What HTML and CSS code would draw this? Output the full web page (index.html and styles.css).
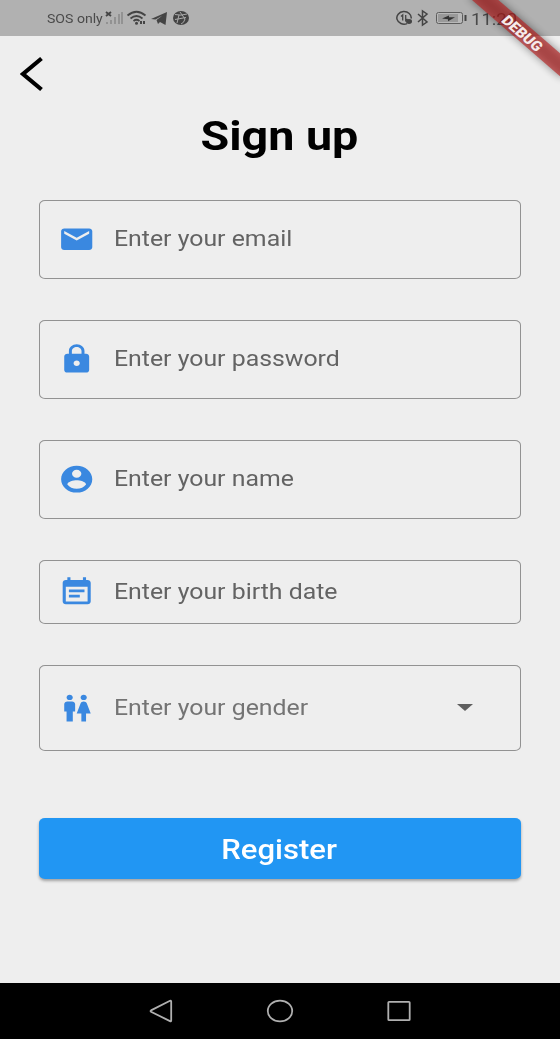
FILE: index.html
```html
<!DOCTYPE html>
<html lang="en">
<head>
<meta charset="utf-8">
<title>Sign up</title>
<link rel="stylesheet" href="styles.css">
</head>
<body>
<div class="screen">
  <header class="status">
    <span class="status-text carrier">SOS only</span>
    <svg class="status-left" width="86" height="20" viewBox="0 0 86 20">
      <path d="M1 3l5 4M6 3l-5 4" stroke="#444" stroke-width="1.9"/>
      <path d="M2 13v2M6 11v4M10 8v7M14 5v10M17 3v12" stroke="#929292" stroke-width="2"/>
      <g fill="none" stroke="#444" stroke-width="1.7"><path d="M22.500 6.500q9-7.500 18 0M25.500 9.500q6-5 12 0M28.500 12q3-2.500 6 0"/></g>
      <circle cx="31.500" cy="14.200" r="1.500" fill="#444"/><path d="M36 12v3M39 12v3" stroke="#444" stroke-width="2"/>
      <path d="M46 10L62 3l-1.500 13-5.500-3-2 2-1.500-4 6-4.500-7 4z" fill="#444"/>
      <ellipse cx="76" cy="9" rx="8" ry="7" fill="#444"/>
      <path d="M70 5.500q6 1.500 12-.5M75 3l5 7q-1 4-4 5M81 8.500l-11 2M74 6l-2 8" stroke="#aaa" stroke-width="1" fill="none"/>
    </svg>
    <svg class="status-right" width="72" height="20" viewBox="0 0 72 20">
      <g fill="none" stroke="#444" stroke-width="1.500">
        <path d="M11 14.600A7.200 6.300 0 1 1 15.200 9.500"/>
        <path d="M6.700 11.500V6L5 7.500M9.700 6v5.500l1.800-1.500" stroke-width="1.300"/>
        <path d="M22 5l9 8-4.500 3V2l4.500 3-9 8"/>
      </g>
      <ellipse cx="13" cy="12.500" rx="3" ry="2.400" fill="#444"/>
      <rect x="40.500" y="3.500" width="26" height="11" rx="2" fill="#b8b8b8" stroke="#5c5c5c"/>
      <rect x="42" y="5" width="20" height="8" fill="#999"/>
      <path d="M46 9.500l7-3v1.800h6l-7 4V10.200z" fill="#333"/>
      <path d="M69.500 6v6" stroke="#444" stroke-width="2"/>
    </svg>
    <span class="status-text clock">11:20</span>
  </header>

  <svg class="ribbon" width="110" height="100" viewBox="0 0 110 100">
    <defs><filter id="soft" x="-30%" y="-100%" width="160%" height="300%"><feGaussianBlur stdDeviation="3"/></filter></defs>
    <g transform="translate(110 0) scale(1.5556 1.347) rotate(45)">
      <rect x="-42" y="28" width="84" height="12" fill="#000" opacity=".42" filter="url(#soft)"/>
      <rect x="-42" y="28" width="84" height="12" fill="#b71c1c" fill-opacity=".63"/>
      <text class="ribbon-text" x="0.400" y="38.200" text-anchor="middle">DEBUG</text>
    </g>
  </svg>

  <main class="content">
    <svg class="back" width="24" height="36" viewBox="0 0 24 36"><path d="M21.500 2.500L3 18l18.500 15.500" fill="none" stroke="#000" stroke-width="4.200"/></svg>
    <h1 class="title"><span class="wide-center">Sign up</span></h1>

    <form class="form">
      <div class="field">
        <svg class="icon" viewBox="0 0 24 24" preserveAspectRatio="none"><path d="M20 4H4c-1.100 0-1.990.9-1.990 2L2 18c0 1.100.9 2 2 2h16c1.100 0 2-.9 2-2V6c0-1.100-.9-2-2-2zm0 4l-8 5-8-5V6l8 5 8-5v2z"/></svg>
        <span class="hint">Enter your email</span>
      </div>
      <div class="field">
        <svg class="icon" viewBox="0 0 24 24" preserveAspectRatio="none"><path d="M18 8h-1V6c0-2.760-2.240-5-5-5S7 3.240 7 6v2H6c-1.100 0-2 .9-2 2v10c0 1.100.9 2 2 2h12c1.100 0 2-.9 2-2V10c0-1.100-.9-2-2-2zm-6 9c-1.100 0-2-.9-2-2s.9-2 2-2 2 .9 2 2-.9 2-2 2zm3.100-9H8.900V6c0-1.710 1.390-3.100 3.100-3.100s3.100 1.390 3.100 3.100v2z"/></svg>
        <span class="hint">Enter your password</span>
      </div>
      <div class="field">
        <svg class="icon" viewBox="0 0 24 24" preserveAspectRatio="none"><path d="M12 2C6.480 2 2 6.480 2 12s4.480 10 10 10 10-4.480 10-10S17.520 2 12 2zm0 3c1.660 0 3 1.340 3 3s-1.340 3-3 3-3-1.340-3-3 1.340-3 3-3zm0 14.200c-2.500 0-4.710-1.280-6-3.220.03-1.990 4-3.080 6-3.080 1.990 0 5.970 1.090 6 3.080-1.290 1.940-3.500 3.220-6 3.220z"/></svg>
        <span class="hint">Enter your name</span>
      </div>
      <div class="field field-date">
        <svg class="icon" viewBox="0 0 24 24" preserveAspectRatio="none"><path d="M17 10H7v2h10v-2zm2-7h-1V1h-2v2H8V1H6v2H5c-1.110 0-1.990.9-1.990 2L3 19c0 1.100.89 2 2 2h14c1.100 0 2-.9 2-2V5c0-1.100-.9-2-2-2zm0 16H5V8h14v11zm-5-5H7v2h7v-2z"/></svg>
        <span class="hint">Enter your birth date</span>
      </div>
      <div class="field field-gender">
        <svg class="icon" viewBox="0 0 24 24" preserveAspectRatio="none"><path d="M5.500 22v-7.500H4V9c0-1.100.9-2 2-2h3c1.100 0 2 .9 2 2v5.500H9.500V22h-4zM18 22v-6h3l-2.540-7.630C18.180 7.550 17.420 7 16.560 7h-.12c-.86 0-1.630.55-1.900 1.370L12 16h3v6h3zM7.500 6c1.110 0 2-.89 2-2s-.89-2-2-2-2 .89-2 2 .89 2 2 2zm9 0c1.110 0 2-.89 2-2s-.89-2-2-2-2 .89-2 2 .89 2 2 2z"/></svg>
        <span class="hint hint-light">Enter your gender</span>
        <svg class="arrow" width="16" height="7" viewBox="0 0 16 7"><path d="M0 0h16L8 7z" fill="#5f5f5f"/></svg>
      </div>
      <button class="register" type="button"><span class="wide-center">Register</span></button>
    </form>
  </main>

  <nav class="nav">
    <svg width="24" height="24" viewBox="0 0 24 24"><path d="M21 1.800q1.200-.5 1.200.8v18.800q0 1.200-1.200.7L2 12.700q-1-.7 0-1.300z"/></svg>
    <svg width="28" height="24" viewBox="0 0 28 24"><ellipse cx="14" cy="12" rx="12.200" ry="10.400"/></svg>
    <svg width="24" height="24" viewBox="0 0 24 24"><rect x="1.300" y="2.800" width="21.400" height="18.400" rx=".8"/></svg>
  </nav>
</div>
</body>
</html>
```
FILE: styles.css
```css
* { box-sizing: border-box; }
body { margin: 0; font-family: Roboto, "Liberation Sans", sans-serif; }
.screen {
  position: relative;
  display: flex;
  flex-direction: column;
  width: 560px;
  height: 1039px;
  overflow: hidden;
  background: #eee;
}
.status {
  display: flex;
  align-items: center;
  height: 36px;
  padding: 2px 0 0 46.5px;
  background: #b1b1b1;
  color: #4a4a4a;
  white-space: nowrap;
}
.status-text {
  display: inline-block;
  flex: none;
  transform: scaleX(1.155);
  transform-origin: 0 50%;
}
.carrier { width: 58px; font-size: 12.2px; }
.status-left { flex: none; }
.status-right { flex: none; margin-left: 205px; }
.clock { margin-left: 3px; font-size: 16px; }
.ribbon { position: absolute; top: 0; right: 0; }
.ribbon-text { font-size: 10.2px; font-weight: 900; fill: #f6eaea; }
.content {
  display: flex;
  flex-direction: column;
  flex: 1;
  padding: 20px 39px 0;
}
.back { margin-left: -19px; flex: none; }
.title {
  margin: 21px 2px 0 0;
  height: 48px;
  font-size: 40.4px;
  line-height: 48px;
  font-weight: 700;
  text-align: center;
  color: #000;
}
.wide-center { display: inline-block; transform: scaleX(1.155); }
.form { display: flex; flex-direction: column; gap: 41px; margin-top: 39px; }
.field {
  display: flex;
  align-items: center;
  height: 79px;
  padding: 0 47px 0 17.7px;
  border: 1px solid #929292;
  border-radius: 6px / 5px;
}
.field-date { height: 64px; }
.field-gender { height: 86px; }
.icon { flex: none; width: 37.4px; height: 32.3px; fill: #3a88e0; }
.hint {
  flex: 1;
  margin: 0 0 1px 19px;
  font-size: 21.5px;
  line-height: 26px;
  color: #636363;
  white-space: nowrap;
  transform: scaleX(1.155);
  transform-origin: 0 50%;
}
.hint-light { color: #747474; }
.arrow { flex: none; margin-bottom: 2px; }
.register {
  height: 61px;
  margin-top: 26px;
  padding: 3px 1px 0 0;
  border: 0;
  border-radius: 6px / 5px;
  background: #2196f3;
  box-shadow: 0 2px 3px rgba(0, 0, 0, .32);
  color: #fff;
  font: 500 26.9px/32px Roboto, "Liberation Sans", sans-serif;
}
.nav {
  display: flex;
  align-items: center;
  justify-content: center;
  gap: 93px;
  height: 56px;
  padding-right: 1px;
  background: #000;
}
.nav svg { fill: none; stroke: #b0b0b0; stroke-width: 1.8; }
```
